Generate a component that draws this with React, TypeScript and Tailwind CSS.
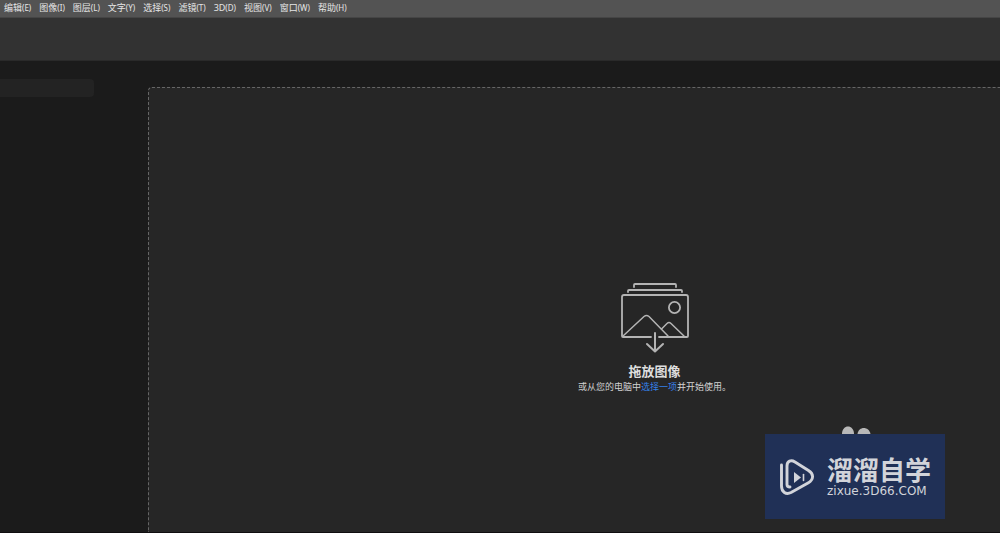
const menus = [
  { label: '编辑', accel: '(E)' },
  { label: '图像', accel: '(I)' },
  { label: '图层', accel: '(L)' },
  { label: '文字', accel: '(Y)' },
  { label: '选择', accel: '(S)' },
  { label: '滤镜', accel: '(T)' },
  { label: '3D', accel: '(D)' },
  { label: '视图', accel: '(V)' },
  { label: '窗口', accel: '(W)' },
  { label: '帮助', accel: '(H)' },
];

function MenuBar() {
  return (
    <nav className="flex h-[18px] shrink-0 items-center gap-2 overflow-hidden border-b border-[#454545] bg-[#535353] px-1 pb-[2px]">
      {menus.map((menu) => (
        <button
          key={menu.label}
          type="button"
          className="flex shrink-0 items-baseline whitespace-nowrap text-[9px] leading-[14px] text-[#e6e6e6]"
        >
          {menu.label}
          <span className="text-[8px]">{menu.accel}</span>
        </button>
      ))}
    </nav>
  );
}

function DropIcon() {
  return (
    <svg
      width="68"
      height="70"
      viewBox="0 0 68 70"
      fill="none"
      stroke="#b4b4b4"
      strokeWidth="1.8"
      strokeLinecap="round"
      strokeLinejoin="round"
      aria-hidden="true"
    >
      <path d="M13 4V2Q13 1 14 1H54Q55 1 55 2V4" />
      <path d="M7 9V8Q7 7 8 7H60Q61 7 61 8V9" />
      <path d="M30 54H2Q1 54 1 53V14Q1 12 3 12H65Q67 12 67 14V53Q67 54 66 54H38" />
      <circle cx="53.5" cy="24.5" r="5.6" />
      <path d="M2 53L23 33.500Q25.500 31.500 28 33.500L47 53" strokeWidth="1.500" />
      <path d="M40.500 46L46 40.500Q48 38.500 50 40.500L63 53" strokeWidth="1.500" />
      <path d="M34 50V68M26 61L34 68.500L42 61" strokeWidth="2" />
    </svg>
  );
}

function Watermark() {
  return (
    <div className="absolute bottom-[13px] right-[55px] h-[85px] w-[180px] bg-[#203056]">
      <svg
        className="absolute bottom-full left-[76px]"
        width="32"
        height="8"
        viewBox="0 0 32 8"
        fill="#b8b8b8"
        aria-hidden="true"
      >
        <path d="M1 8C1-2 13-2 13 8Z" />
        <path d="M16.500 8C17.500 0 28 0 29.500 8Z" />
      </svg>
      <div className="flex h-full items-center gap-3 pl-[14px] text-[#d2d4da]">
        <svg
          width="36"
          height="38"
          viewBox="0 0 36 38"
          fill="none"
          stroke="currentColor"
          strokeWidth="2.900"
          strokeLinecap="round"
          strokeLinejoin="round"
          aria-hidden="true"
        >
          <path d="M2.500 7V28C2.500 34 7 37 12 34.500L29 25C35 21.500 35 16 29.500 12.500L16 4C12 1.500 8 3 8 8V26.500Q8 29 11 29" />
          <path d="M15 14V25L22 19.500Z" fill="currentColor" stroke="none" />
          <path d="M24.500 16.500V22.500" strokeWidth="1.600" />
        </svg>
        <div className="flex flex-col whitespace-nowrap">
          <span className="font-['Noto_Sans_CJK_SC',sans-serif] text-[26px] font-bold leading-[28px]">
            溜溜自学
          </span>
          <span className="font-['DejaVu_Sans',sans-serif] text-[12px] leading-[16px]">
            zixue.3D66.COM
          </span>
        </div>
      </div>
    </div>
  );
}

export default function App() {
  return (
    <div className="relative flex h-screen flex-col overflow-hidden border-b border-[#100e10] bg-[#1b1b1b] font-['Noto_Sans','Noto_Sans_CJK_SC',sans-serif]">
      <MenuBar />
      <header className="h-[43px] shrink-0 border-b border-[#2a2a2a] bg-[#323232]" />
      <div className="flex min-h-0 flex-1">
        <aside className="w-[148px] shrink-0 pt-[18px]">
          <div className="h-[18px] w-[94px] rounded-r-sm bg-[#232323]" />
        </aside>
        <main className="-mr-40 flex min-w-0 flex-1 flex-col pt-[26px]">
          <section className="flex flex-1 flex-col items-center rounded-tl border-l border-t border-dashed border-[#666666] bg-[#262626] pt-[195px]">
            <DropIcon />
            <h1 className="mt-[9px] text-[13px] font-bold leading-[18px] text-[#dedede]">拖放图像</h1>
            <p className="text-[9px] leading-[13px] text-[#d2d2d2]">
              或从您的电脑中
              <a href="#" className="text-[#3580e8]">
                选择一项
              </a>
              并开始使用。
            </p>
          </section>
        </main>
      </div>
      <Watermark />
    </div>
  );
}
